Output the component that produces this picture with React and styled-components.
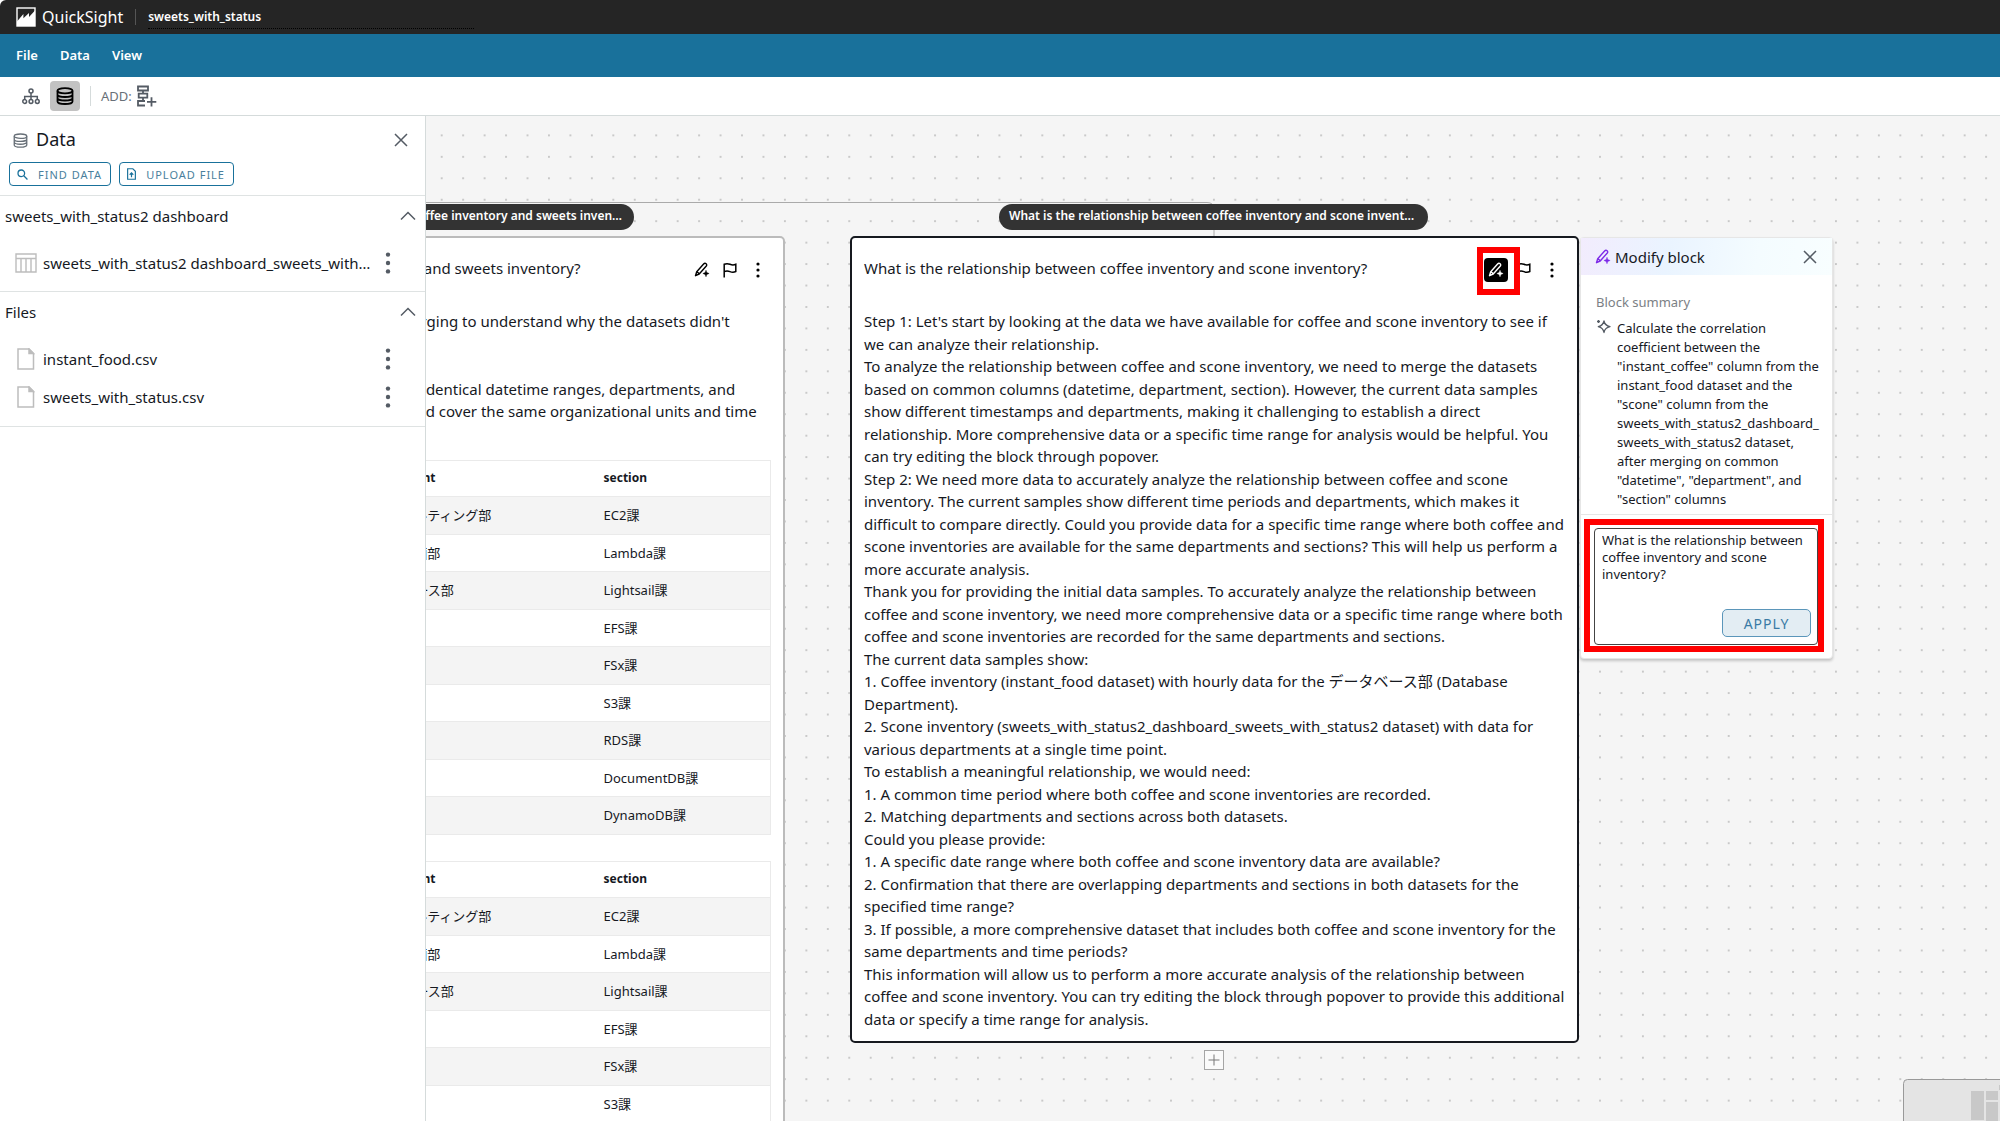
import styled, {createGlobalStyle, css} from 'styled-components';
import {useState} from 'react';

const GlobalStyle = createGlobalStyle`
    * {
        box-sizing: border-box;
    }

    body {
        margin: 0;
        overflow: hidden;
        color: #16191f;
        background: #fff;
        font-family: "Noto Sans", "Noto Sans CJK JP", sans-serif;
        font-size: 13px;
    }

    button, input, textarea {
        font-family: inherit;
        color: inherit;
    }

    h1, h2, h3, p {
        margin: 0;
        font-weight: 400;
    }

    svg {
        display: block;
        flex: none;
    }
`;

/* ---------- icons ---------- */

const LogoIcon = () => (
    <svg width="20" height="20" viewBox="0 0 20 20">
        <rect x="1" y="1" width="18" height="18" fill="none" stroke="#fff" strokeWidth="1.4" />
        <path d="M1 14.500 7.400 7v4.200L13 6v4L19 3.600V19H1z" fill="#fff" />
    </svg>
);

const TreeIcon = () => (
    <svg width="18" height="18" viewBox="0 0 18 18" fill="none" stroke="#545b64" strokeWidth="1.500">
        <circle cx="9" cy="4" r="2" />
        <circle cx="2.700" cy="14.500" r="1.900" />
        <circle cx="9" cy="14.500" r="1.900" />
        <circle cx="15.300" cy="14.500" r="1.900" />
        <path d="M9 6v6.600M2.700 12.600V9.600h12.600v3" />
    </svg>
);

const DatabaseIcon = ({size = 18, color = '#000', weight = 1.8}) => (
    <svg width={size} height={size} viewBox="0 0 18 18" fill="none" stroke={color} strokeWidth={weight}>
        <ellipse cx="9" cy="3.800" rx="7.500" ry="2.600" />
        <path d="M1.500 3.800v10.600c0 1.400 3.400 2.600 7.500 2.600s7.500-1.200 7.500-2.600V3.800M1.500 7.400C1.500 8.800 4.900 10 9 10s7.500-1.200 7.500-2.600M1.500 10.900c0 1.400 3.400 2.600 7.500 2.600s7.500-1.200 7.500-2.600" />
    </svg>
);

const AddBlockIcon = () => (
    <svg width="20" height="22" viewBox="0 0 20 22" fill="none" stroke="#545b64" strokeWidth="1.800">
        <path d="M1 1.500h10v4H1zM1.700 8.700h8.600v4H1.700zM8 16H1v4.500h7M6 5.500v3.200M6 12.700V16" />
        <path d="M14.500 12.200v9.300M10 16.800h9.300" />
    </svg>
);

const CloseIcon = () => (
    <svg width="14" height="14" viewBox="0 0 14 14" fill="none" stroke="#545b64" strokeWidth="1.500">
        <path d="M1 1l12 12M13 1 1 13" />
    </svg>
);

const SearchIcon = () => (
    <svg width="11" height="11" viewBox="0 0 12 12" fill="none" stroke="#19719b" strokeWidth="1.400">
        <circle cx="4.700" cy="4.700" r="3.600" />
        <path d="m7.400 7.400 4 4" />
    </svg>
);

const UploadIcon = () => (
    <svg width="9" height="12" viewBox="0 0 10 13" fill="none" stroke="#19719b" strokeWidth="1.300">
        <path d="M.7.700h5.800L9.300 3.500v8.800H.7z" />
        <path d="M5 10V5.500M3 7.300l2-2 2 2" />
    </svg>
);

const ChevronIcon = () => (
    <svg width="16" height="10" viewBox="0 0 16 10" fill="none" stroke="#545b64" strokeWidth="1.500">
        <path d="m1 8.500 7-7 7 7" />
    </svg>
);

const TableIcon = () => (
    <svg width="22" height="20" viewBox="0 0 22 20" fill="none" stroke="#bdbdbd" strokeWidth="1.400">
        <path d="M1 1h20v18H1zM1 5.500h20M6 5.500V19M11 5.500V19M16 5.500V19" />
    </svg>
);

const FileIcon = () => (
    <svg width="18" height="22" viewBox="0 0 18 22" fill="none" stroke="#bdbdbd" strokeWidth="1.500">
        <path d="M1 1h11l4.500 4.500V21H1z" />
        <path d="M12 1v4.500h4.500z" fill="#bdbdbd" />
    </svg>
);

const KebabIcon = ({size = 16, radius = 1.6}) => (
    <svg width="6" height={size} viewBox={`0 0 6 ${size}`} fill="currentColor">
        <circle cx="3" cy={radius + 0.4} r={radius} />
        <circle cx="3" cy={size / 2} r={radius} />
        <circle cx="3" cy={size - radius - 0.4} r={radius} />
    </svg>
);

const PencilIcon = () => (
    <svg width="16" height="16" viewBox="0 0 16 16" fill="none" stroke="currentColor" strokeWidth="1.400" strokeLinejoin="round">
        <path d="M1.500 13.700 2.700 9.700 9.600 2c.8-.9 1.800-.9 2.500-.3.800.7.800 1.700 0 2.500L5.200 12zM3 9.700l2.300 2.100" />
        <path d="M12 8.300c.4 2.100 1 2.700 3.100 3.200-2.100.5-2.700 1.100-3.100 3.200-.4-2.100-1-2.700-3.100-3.200 2.100-.5 2.700-1.100 3.100-3.200z" fill="currentColor" strokeWidth=".5" />
    </svg>
);

const FlagIcon = () => (
    <svg width="16" height="16" viewBox="0 0 16 16" fill="none" stroke="currentColor" strokeWidth="1.500">
        <path d="M2.200 15.500V2.300c2-.9 3.800-.8 5.800 0s3.900.8 5.800 0v7.200c-2 .9-3.800.9-5.800.1s-3.800-.9-5.800 0" />
    </svg>
);

const SparkleIcon = () => (
    <svg width="15" height="15" viewBox="0 0 15 15" fill="none" stroke="#545b64" strokeWidth="1.300" strokeLinejoin="round">
        <path d="M8 2c.7 3.500 2 4.800 6 5.700-4 .9-5.300 2.200-6 5.800-.7-3.600-2-4.900-5.700-5.800C6 6.800 7.300 5.500 8 2z" />
        <path d="M2.500 1v3M1 2.500h3" />
    </svg>
);

/* ---------- top bars ---------- */

const Page = styled.div`
    display: flex;
    flex-direction: column;
    height: 100vh;
`;

const TopBar = styled.header`
    display: flex;
    align-items: center;
    height: 34px;
    padding-left: 16px;
    color: #fff;
    background: #252525;
    border-top-left-radius: 6px;
`;

const Brand = styled.span`
    margin-left: 6px;
    font-size: 16px;
`;

const Separator = styled.span`
    width: 1px;
    height: ${({$height}) => $height}px;
    margin: 0 ${({$space}) => $space}px;
    background: ${({$color}) => $color};
`;

const TitleInput = styled.input`
    width: 326px;
    height: 24px;
    padding: 0;
    border: 0;
    border-bottom: 1px dotted #000;
    outline: none;
    background: transparent;
    font-size: 12px;
    font-weight: 600;
`;

const MenuBar = styled.nav`
    display: flex;
    align-items: center;
    gap: 22px;
    height: 43px;
    padding: 0 16px 2px;
    background: #19719b;
`;

const MenuButton = styled.button`
    padding: 0;
    border: 0;
    background: none;
    color: #fff;
    font-size: 13px;
    font-weight: 600;
`;

const Toolbar = styled.div`
    display: flex;
    align-items: center;
    gap: 4px;
    height: 39px;
    padding-left: 16px;
    border-bottom: 1px solid #d5dbdb;
    background: #fff;
`;

const ToolButton = styled.button`
    display: flex;
    align-items: center;
    justify-content: center;
    width: ${({$width}) => $width || 30}px;
    height: 30px;
    padding: 0;
    border: 0;
    border-radius: 4px;
    background: ${({$active}) => ($active ? '#c2c2c2' : 'none')};
`;

const ToolLabel = styled.span`
    color: #687078;
    font-size: 13px;
`;

/* ---------- side panel ---------- */

const Main = styled.main`
    display: flex;
    flex: 1;
    min-height: 0;
`;

const SidePanel = styled.aside`
    flex: none;
    width: 426px;
    border-right: 1px solid #d5dbdb;
    background: #fff;
`;

const PanelHeader = styled.div`
    display: flex;
    align-items: center;
    gap: 8px;
    height: 46px;
    padding: 2px 17px 0 13px;
`;

const PanelTitle = styled.h2`
    flex: 1;
    padding-bottom: 2px;
    font-size: 18px;
    line-height: 24px;
`;

const IconButton = styled.button`
    display: flex;
    align-items: center;
    justify-content: center;
    width: ${({$size}) => $size || 14}px;
    height: 24px;
    padding: 0;
    border: 0;
    border-radius: 4px;
    background: none;
    color: ${({$muted}) => ($muted ? '#545b64' : '#000')};

    ${({$active}) => $active && css`
        background: #000;
        color: #fff;
    `}
`;

const PanelActions = styled.div`
    display: flex;
    gap: 8px;
    padding: 0 9px 9px;
`;

const OutlineButton = styled.button`
    display: flex;
    align-items: center;
    gap: 10px;
    height: 24px;
    padding: 0 8px 0 7px;
    border: 1px solid #19719b;
    border-radius: 4px;
    background: #fff;
    color: #4a7f9d;
    font-size: 11px;
    letter-spacing: 1px;
`;

const Section = styled.section`
    padding-bottom: ${({$last}) => ($last ? 10 : 9)}px;
    border-top: 1px solid #dfe3e3;

    &:last-child {
        border-bottom: 1px solid #dfe3e3;
    }
`;

const SectionHeader = styled.div`
    display: flex;
    align-items: center;
    justify-content: space-between;
    height: 39px;
    padding: 0 9px 0 5px;
    font-size: 15px;
`;

const SourceList = styled.ul`
    margin: 9px 0 0;
    padding: 0;
    list-style: none;
`;

const SourceItem = styled.li`
    display: flex;
    align-items: center;
    height: 38px;
    padding: 0 33px 0 15px;
    font-size: 15px;
`;

const SourceIcon = styled.span`
    display: flex;
    justify-content: center;
    width: 22px;
    margin-right: 6px;
`;

const SourceName = styled.span`
    flex: 1;
    white-space: nowrap;
`;

/* ---------- canvas ---------- */

const Canvas = styled.div`
    position: relative;
    flex: 1;
    overflow: hidden;
    background: #f5f5f5;
`;

const CanvasLayer = styled.svg`
    position: absolute;
    inset: 0;
    width: 100%;
    height: 100%;
`;

/* A node keeps its own place on the free canvas. */
const Node = styled.div`
    position: absolute;
    top: ${({$y}) => $y}px;
    left: ${({$x}) => $x}px;
`;

const Pill = styled.div`
    width: 429px;
    height: 26px;
    padding: 0 10px;
    overflow: hidden;
    border-radius: 13px;
    background: #333;
    color: #fff;
    font-size: 12px;
    font-weight: 600;
    line-height: 24px;
    white-space: nowrap;
`;

const Card = styled.article`
    width: 729px;
    padding: 10px 12px 11px;
    border: 2px solid ${({$selected}) => ($selected ? '#16191f' : '#bbb')};
    border-radius: 5px;
    background: #fff;
`;

const CardHeader = styled.div`
    display: flex;
    align-items: center;
    height: 40px;
    margin-bottom: 22px;
`;

const CardTitle = styled.h3`
    flex: 1;
    font-size: 15px;
`;

const CardActions = styled.div`
    display: flex;
    gap: 4px;
    padding: 4px 1px 0 0;
`;

const CardText = styled.div`
    font-size: 15px;
    line-height: 1.5;
    white-space: nowrap;
`;

const DataTable = styled.table`
    width: 700px;
    margin-top: ${({$first}) => ($first ? 37 : 26)}px;
    border: 1px solid #eaeaea;
    border-collapse: collapse;
    table-layout: fixed;
    font-size: 13px;

    th, td {
        height: 37px;
        padding: 0 18px;
        border: solid #eaeaea;
        border-width: 1px 0;
        text-align: left;
        line-height: 18px;
    }

    th {
        height: 36px;
        font-size: 12px;
        font-weight: 700;
    }

    tbody tr:nth-child(odd) {
        background: #f4f4f4;
    }

    tbody tr:nth-child(odd) td {
        height: 38px;
    }
`;

const AddNodeButton = styled.button`
    display: flex;
    align-items: center;
    justify-content: center;
    width: 20px;
    height: 20px;
    padding: 0;
    border: 1px solid #a5a5a5;
    background: #fafafa;
`;

/* ---------- modify panel ---------- */

const Popover = styled.div`
    width: 253px;
    border: 1px solid #e6e6e6;
    border-radius: 4px;
    background: #fff;
    box-shadow: 0 2px 3px rgba(0, 0, 0, 0.2);
`;

const PopoverHeader = styled.div`
    display: flex;
    align-items: center;
    gap: 4px;
    height: 37px;
    padding: 0 15px 0 14px;
    background: linear-gradient(100deg, #f2ecfd 0%, #eaf4ff 35%, #f4fcff 70%, #f8feff 100%);
    color: #7d2ae8;
`;

const PopoverTitle = styled.h3`
    flex: 1;
    color: #16191f;
    font-size: 15px;
`;

const Summary = styled.div`
    padding: 18px 8px 5px 15px;
    border-bottom: 1px solid #e6e6e6;
    font-size: 13px;
    line-height: 19px;
`;

const SummaryLabel = styled.p`
    margin-bottom: 7px;
    color: #7b8085;
    font-size: 13px;
`;

const SummaryBody = styled.div`
    display: flex;
    gap: 6px;
    white-space: nowrap;
`;

const PromptArea = styled.div`
    padding: 13px 14px 13px 13px;
`;

const PromptBox = styled.div`
    display: flex;
    flex-direction: column;
    align-items: flex-end;
    height: 117px;
    padding: 3px 6px 7px 7px;
    border: 1px solid #444;
    border-radius: 4px;
`;

const PromptInput = styled.textarea`
    flex: 1;
    width: 100%;
    padding: 0;
    border: 0;
    outline: none;
    resize: none;
    overflow: hidden;
    background: transparent;
    font-size: 13px;
    line-height: 17px;
`;

const ApplyButton = styled.button`
    width: 89px;
    height: 28px;
    padding: 0;
    border: 1px solid #5b96ba;
    border-radius: 5px;
    background: #e3edf3;
    color: #3a7ba5;
    font-size: 14px;
    letter-spacing: 1px;
`;

const Highlight = styled.div`
    width: ${({$width}) => $width}px;
    height: ${({$height}) => $height}px;
    border: 6px solid #f00;
    pointer-events: none;
`;

const MiniMap = styled.svg`
    position: absolute;
    right: 0;
    bottom: 0;
`;

/* ---------- data ---------- */

const rows = [
    ['2024-09-01 00:00:00', 'ITコンサルティング部', 'EC2課'],
    ['2024-09-01 00:00:00', 'IT運用企画部', 'Lambda課'],
    ['2024-09-01 00:00:00', 'データベース部', 'Lightsail課'],
    ['2024-09-01 00:00:00', '総務部', 'EFS課'],
    ['2024-09-01 00:00:00', '経理部', 'FSx課'],
    ['2024-09-01 00:00:00', '人事部', 'S3課'],
    ['2024-09-01 00:00:00', '開発部', 'RDS課'],
    ['2024-09-01 00:00:00', '法務部', 'DocumentDB課'],
    ['2024-09-01 00:00:00', '広報部', 'DynamoDB課'],
];

const sconeText = [
    ["Step 1: Let's start by looking at the data we have available for coffee and scone inventory to see if", 'we can analyze their relationship.'],
    [
        'To analyze the relationship between coffee and scone inventory, we need to merge the datasets',
        'based on common columns (datetime, department, section). However, the current data samples',
        'show different timestamps and departments, making it challenging to establish a direct',
        'relationship. More comprehensive data or a specific time range for analysis would be helpful. You',
        'can try editing the block through popover.',
    ],
    [
        'Step 2: We need more data to accurately analyze the relationship between coffee and scone',
        'inventory. The current samples show different time periods and departments, which makes it',
        'difficult to compare directly. Could you provide data for a specific time range where both coffee and',
        'scone inventories are available for the same departments and sections? This will help us perform a',
        'more accurate analysis.',
    ],
    [
        'Thank you for providing the initial data samples. To accurately analyze the relationship between',
        'coffee and scone inventory, we need more comprehensive data or a specific time range where both',
        'coffee and scone inventories are recorded for the same departments and sections.',
    ],
    ['The current data samples show:'],
    ['1. Coffee inventory (instant_food dataset) with hourly data for the データベース部 (Database', 'Department).'],
    ['2. Scone inventory (sweets_with_status2_dashboard_sweets_with_status2 dataset) with data for', 'various departments at a single time point.'],
    ['To establish a meaningful relationship, we would need:'],
    ['1. A common time period where both coffee and scone inventories are recorded.'],
    ['2. Matching departments and sections across both datasets.'],
    ['Could you please provide:'],
    ['1. A specific date range where both coffee and scone inventory data are available?'],
    ['2. Confirmation that there are overlapping departments and sections in both datasets for the', 'specified time range?'],
    ['3. If possible, a more comprehensive dataset that includes both coffee and scone inventory for the', 'same departments and time periods?'],
    [
        'This information will allow us to perform a more accurate analysis of the relationship between',
        'coffee and scone inventory. You can try editing the block through popover to provide this additional',
        'data or specify a time range for analysis.',
    ],
];

const sweetsText = [
    ["Step 1: Let's look at the data columns used for merging to understand why the datasets didn't", 'merge properly.'],
    ['Analysis:'],
    ['The samples of both of these datasets have some identical datetime ranges, departments, and', 'sections. They both have the same key columns and cover the same organizational units and time'],
];

const summaryText = [
    'Calculate the correlation',
    'coefficient between the',
    '"instant_coffee" column from the',
    'instant_food dataset and the',
    '"scone" column from the',
    'sweets_with_status2_dashboard_',
    'sweets_with_status2 dataset,',
    'after merging on common',
    '"datetime", "department", and',
    '"section" columns',
];

const Lines = ({lines}) => (
    <p>
        {lines.map((line) => (
            <span key={line}>{line}<br /></span>
        ))}
    </p>
);

const Source = ({icon, name}) => (
    <SourceItem>
        <SourceIcon>{icon}</SourceIcon>
        <SourceName>{name}</SourceName>
        <IconButton $size={8} $muted aria-label={`${name} menu`}><KebabIcon size={22} radius={2.2} /></IconButton>
    </SourceItem>
);

const Block = ({title, text, selected, children}) => (
    <Card $selected={selected}>
        <CardHeader>
            <CardTitle>{title}</CardTitle>
            <CardActions>
                <IconButton $size={24} $active={selected} aria-label="Modify block"><PencilIcon /></IconButton>
                <IconButton $size={24} aria-label="Flag"><FlagIcon /></IconButton>
                <IconButton $size={24} aria-label="More"><KebabIcon /></IconButton>
            </CardActions>
        </CardHeader>
        <CardText>
            {text.map((lines) => <Lines key={lines[0]} lines={lines} />)}
        </CardText>
        {children}
    </Card>
);

const SectionTable = ({first}) => (
    <DataTable $first={first}>
        <colgroup>
            <col width="275" />
            <col width="240" />
            <col width="185" />
        </colgroup>
        <thead>
            <tr>
                <th>datetime</th>
                <th>department</th>
                <th>section</th>
            </tr>
        </thead>
        <tbody>
            {rows.map(([datetime, department, section]) => (
                <tr key={section}>
                    <td>{datetime}</td>
                    <td>{department}</td>
                    <td>{section}</td>
                </tr>
            ))}
        </tbody>
    </DataTable>
);

function App () {
    const [title, setTitle] = useState('sweets_with_status');
    const [prompt, setPrompt] = useState('What is the relationship between coffee inventory and scone inventory?');

    return (
        <Page>
            <GlobalStyle />
            <TopBar>
                <LogoIcon />
                <Brand>QuickSight</Brand>
                <Separator $height={16} $space={12} $color="#555" />
                <TitleInput aria-label="Title" value={title} onChange={(e) => setTitle(e.target.value)} />
            </TopBar>
            <MenuBar>
                <MenuButton>File</MenuButton>
                <MenuButton>Data</MenuButton>
                <MenuButton>View</MenuButton>
            </MenuBar>
            <Toolbar>
                <ToolButton aria-label="Outline"><TreeIcon /></ToolButton>
                <ToolButton $active aria-label="Data"><DatabaseIcon /></ToolButton>
                <Separator $height={20} $space={6} $color="#d5dbdb" />
                <ToolLabel>ADD:</ToolLabel>
                <ToolButton $width={22} aria-label="Add block"><AddBlockIcon /></ToolButton>
            </Toolbar>
            <Main>
                <SidePanel>
                    <PanelHeader>
                        <DatabaseIcon size={15} color="#687078" weight={1.6} />
                        <PanelTitle>Data</PanelTitle>
                        <IconButton aria-label="Close"><CloseIcon /></IconButton>
                    </PanelHeader>
                    <PanelActions>
                        <OutlineButton><SearchIcon />FIND DATA</OutlineButton>
                        <OutlineButton><UploadIcon />UPLOAD FILE</OutlineButton>
                    </PanelActions>
                    <Section>
                        <SectionHeader>
                            sweets_with_status2 dashboard
                            <IconButton $size={16} aria-label="Collapse"><ChevronIcon /></IconButton>
                        </SectionHeader>
                        <SourceList>
                            <Source icon={<TableIcon />} name="sweets_with_status2 dashboard_sweets_with…" />
                        </SourceList>
                    </Section>
                    <Section $last>
                        <SectionHeader>
                            Files
                            <IconButton $size={16} aria-label="Collapse"><ChevronIcon /></IconButton>
                        </SectionHeader>
                        <SourceList>
                            <Source icon={<FileIcon />} name="instant_food.csv" />
                            <Source icon={<FileIcon />} name="sweets_with_status.csv" />
                        </SourceList>
                    </Section>
                </SidePanel>
                <Canvas>
                    <CanvasLayer>
                        <defs>
                            <pattern id="dots" x="5" y="73" width="21.450" height="21.450" patternUnits="userSpaceOnUse">
                                <circle cx="10.700" cy="10.700" r="0.900" fill="#b5b5b5" />
                            </pattern>
                        </defs>
                        <rect width="100%" height="100%" fill="url(#dots)" />
                        <path d="M0 86.500h781q7 0 7 7V121" fill="none" stroke="#aaa" />
                    </CanvasLayer>

                    <Node $x={-221} $y={88}>
                        <Pill>What is the relationship between coffee inventory and sweets inven…</Pill>
                    </Node>
                    <Node $x={-370} $y={120}>
                        <Block title="What is the relationship between coffee inventory and sweets inventory?" text={sweetsText}>
                            <SectionTable first />
                            <SectionTable />
                        </Block>
                    </Node>

                    <Node $x={573} $y={88}>
                        <Pill>What is the relationship between coffee inventory and scone invent…</Pill>
                    </Node>
                    <Node $x={424} $y={120}>
                        <Block selected title="What is the relationship between coffee inventory and scone inventory?" text={sconeText} />
                    </Node>
                    <Node $x={778} $y={934}>
                        <AddNodeButton aria-label="Add block">
                            <svg width="12" height="12" viewBox="0 0 12 12" stroke="#777"><path d="M6 .5v11M.5 6h11" /></svg>
                        </AddNodeButton>
                    </Node>

                    <Node $x={1154} $y={121}>
                        <Popover>
                            <PopoverHeader>
                                <PencilIcon />
                                <PopoverTitle>Modify block</PopoverTitle>
                                <IconButton aria-label="Close"><CloseIcon /></IconButton>
                            </PopoverHeader>
                            <Summary>
                                <SummaryLabel>Block summary</SummaryLabel>
                                <SummaryBody>
                                    <SparkleIcon />
                                    <Lines lines={summaryText} />
                                </SummaryBody>
                            </Summary>
                            <PromptArea>
                                <PromptBox>
                                    <PromptInput aria-label="Prompt" value={prompt} onChange={(e) => setPrompt(e.target.value)} />
                                    <ApplyButton>APPLY</ApplyButton>
                                </PromptBox>
                            </PromptArea>
                        </Popover>
                    </Node>

                    <Node $x={1051} $y={131}><Highlight $width={43} $height={48} /></Node>
                    <Node $x={1158} $y={403}><Highlight $width={240} $height={133} /></Node>

                    <MiniMap width="97" height="42" viewBox="0 0 97 42">
                        <rect x=".5" y=".5" width="110" height="60" rx="4" fill="#e4e4e4" stroke="#999" />
                        <path d="M68 12h13v29H68zM83 12h12v9H83zM83 23h12v19H83zM96 6h1v5h-1z" fill="#c8c8c8" />
                    </MiniMap>
                </Canvas>
            </Main>
        </Page>
    )
}

export default App;
